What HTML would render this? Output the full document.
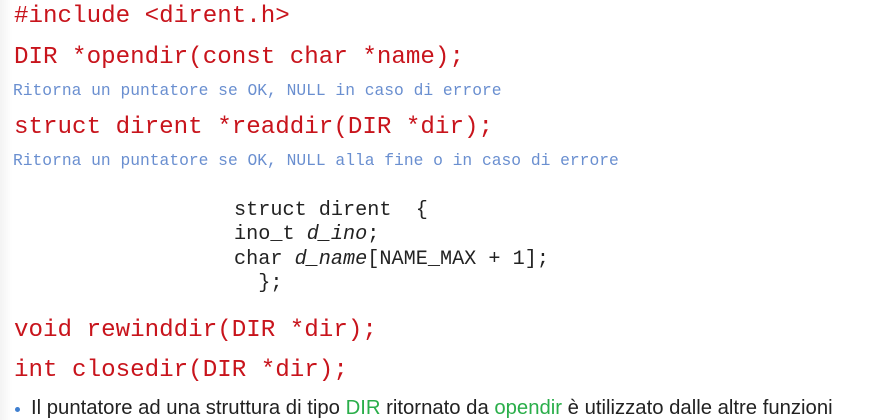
<!DOCTYPE html>
<html><head><meta charset="utf-8"><style>
body{margin:0;width:890px;height:420px;overflow:hidden;background:linear-gradient(90deg,#f3f3f3 0,#fff 12px,#fff 100%);position:relative;font-family:"Liberation Mono",monospace}
.r{position:absolute;left:14px;font-size:24.2px;color:#c8141c;white-space:pre;line-height:1}
.b{position:absolute;left:13px;font-size:16.3px;color:#6a8fd0;white-space:pre;line-height:1}
.k{position:absolute;left:234px;font-size:20.2px;color:#222;white-space:pre;line-height:1}
i{font-style:italic}
.t{position:absolute;left:31px;top:397px;font-family:"Liberation Sans",sans-serif;font-size:20.3px;color:#222;white-space:pre;line-height:1.1}
.g{color:#2aae4a}
.dot{position:absolute;left:15px;top:407px;width:5px;height:5px;border-radius:50%;background:#3f7fd0}
</style></head><body>
<div class="r" style="top:5px">#include &lt;dirent.h&gt;</div>
<div class="r" style="top:46px">DIR *opendir(const char *name);</div>
<div class="b" style="top:83px">Ritorna un puntatore se OK, NULL in caso di errore</div>
<div class="r" style="top:116px">struct dirent *readdir(DIR *dir);</div>
<div class="b" style="top:153px">Ritorna un puntatore se OK, NULL alla fine o in caso di errore</div>
<div class="k" style="top:201px">struct dirent  {</div>
<div class="k" style="top:225px">ino_t <i>d_ino</i>;</div>
<div class="k" style="top:250px">char <i>d_name</i>[NAME_MAX + 1];</div>
<div class="k" style="top:274px">  };</div>
<div class="r" style="top:319px">void rewinddir(DIR *dir);</div>
<div class="r" style="top:359px">int closedir(DIR *dir);</div>
<div class="dot"></div>
<div class="t">Il puntatore ad una struttura di tipo <span class="g">DIR</span> ritornato da <span class="g">opendir</span> è utilizzato dalle altre funzioni</div>
</body></html>
